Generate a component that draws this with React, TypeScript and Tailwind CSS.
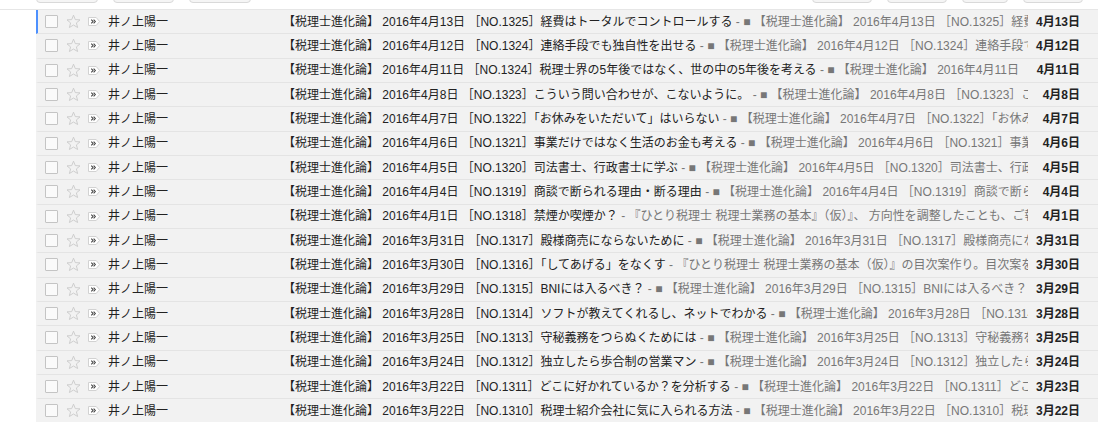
import React from "react";

type Mail = {
  date: string;
  no: string;
  title: string;
  snippet?: string;
  right: string;
};

const mails: Mail[] = [
  { date: "2016年4月13日", no: "1325", title: "経費はトータルでコントロールする", right: "4月13日" },
  { date: "2016年4月12日", no: "1324", title: "連絡手段でも独自性を出せる", right: "4月12日" },
  { date: "2016年4月11日", no: "1324", title: "税理士界の5年後ではなく、世の中の5年後を考える", right: "4月11日" },
  { date: "2016年4月8日", no: "1323", title: "こういう問い合わせが、こないように。", right: "4月8日" },
  { date: "2016年4月7日", no: "1322", title: "「お休みをいただいて」はいらない", right: "4月7日" },
  { date: "2016年4月6日", no: "1321", title: "事業だけではなく生活のお金も考える", right: "4月6日" },
  { date: "2016年4月5日", no: "1320", title: "司法書士、行政書士に学ぶ", right: "4月5日" },
  { date: "2016年4月4日", no: "1319", title: "商談で断られる理由・断る理由", right: "4月4日" },
  {
    date: "2016年4月1日",
    no: "1318",
    title: "禁煙か喫煙か？",
    snippet: "『ひとり税理士 税理士業務の基本』（仮）』、 方向性を調整したことも、ご報告します。",
    right: "4月1日",
  },
  { date: "2016年3月31日", no: "1317", title: "殿様商売にならないために", right: "3月31日" },
  {
    date: "2016年3月30日",
    no: "1316",
    title: "「してあげる」をなくす",
    snippet: "『ひとり税理士 税理士業務の基本（仮）』の目次案作り。目次案をつくりました。",
    right: "3月30日",
  },
  { date: "2016年3月29日", no: "1315", title: "BNIには入るべき？", right: "3月29日" },
  { date: "2016年3月28日", no: "1314", title: "ソフトが教えてくれるし、ネットでわかる", right: "3月28日" },
  { date: "2016年3月25日", no: "1313", title: "守秘義務をつらぬくためには", right: "3月25日" },
  { date: "2016年3月24日", no: "1312", title: "独立したら歩合制の営業マン", right: "3月24日" },
  { date: "2016年3月22日", no: "1311", title: "どこに好かれているか？を分析する", right: "3月23日" },
  { date: "2016年3月22日", no: "1310", title: "税理士紹介会社に気に入られる方法", right: "3月22日" },
];

function StarIcon() {
  return (
    <svg width="15" height="15" viewBox="0 0 15 15" className="shrink-0">
      <polygon
        points="7.5,1.2 9.3,5.6 14,5.9 10.4,8.9 11.6,13.5 7.5,11 3.4,13.5 4.6,8.9 1,5.9 5.7,5.6"
        fill="none"
        stroke="#c9c9c9"
        strokeWidth="0.9"
        strokeLinejoin="round"
      />
    </svg>
  );
}

function ImportanceIcon() {
  return (
    <svg width="14" height="11" viewBox="0 0 14 11" className="shrink-0">
      <path d="M1.5 1.5 H9.2 L12.6 5.5 L9.2 9.5 H1.5 Z" fill="#fff" stroke="#d2d2d2" strokeWidth="1" />
      <path d="M4.3 3.6 L6 5.5 L4.3 7.4 M6.6 3.6 L8.3 5.5 L6.6 7.4" fill="none" stroke="#444" strokeWidth="1.1" />
    </svg>
  );
}

function MailRow({ mail, selected }: { mail: Mail; selected: boolean }) {
  const snippet = mail.snippet ?? `■ 【税理士進化論】 ${mail.date} ［NO.${mail.no}］${mail.title}`;

  return (
    <div
      className={`flex h-[24.33px] items-center border-b border-l-2 border-b-[#e4e4e4] bg-[#f2f2f2] ${
        selected ? "border-l-[#4d90fe]" : "border-l-transparent"
      }`}
    >
      <span className="ml-[7px] h-[13px] w-[13px] shrink-0 rounded-[1px] border border-[#c4c4c4] bg-[#fafafa]" />
      <span className="ml-[8px] flex">
        <StarIcon />
      </span>
      <span className="ml-[6px] flex">
        <ImportanceIcon />
      </span>
      <span className="ml-[7px] w-[175px] shrink-0 truncate text-[#222]">井ノ上陽一</span>
      <div className="min-w-0 flex-1 overflow-hidden whitespace-nowrap">
        <span className="text-[#222]">
          【税理士進化論】 {mail.date} ［NO.{mail.no}］{mail.title}
        </span>
        <span className="text-[#777]"> - {snippet}</span>
      </div>
      <span className="w-[70px] shrink-0 pr-[18px] text-right font-bold text-[#222]">{mail.right}</span>
    </div>
  );
}

export default function App() {
  return (
    <div
      className="h-[422px] w-[1098px] overflow-hidden bg-white text-[12px]"
      style={{ fontFamily: '"Liberation Sans", "Noto Sans CJK JP", sans-serif' }}
    >
      <div className="h-[10px] overflow-hidden border-b border-[#e6e6e6]">
        <div className="-mt-[25px] flex pl-[36px] pr-[15px]">
          <div className="flex gap-[15px]">
            <span className="h-[28px] w-[62px] rounded-sm border border-[#d9d9d9] bg-[#f5f5f5]" />
            <span className="h-[28px] w-[61px] rounded-sm border border-[#d9d9d9] bg-[#f5f5f5]" />
            <span className="h-[28px] w-[62px] rounded-sm border border-[#d9d9d9] bg-[#f5f5f5]" />
          </div>
          <div className="ml-auto flex gap-[15px]">
            <span className="h-[28px] w-[60px] rounded-sm border border-[#d9d9d9] bg-[#f5f5f5]" />
            <span className="h-[28px] w-[60px] rounded-sm border border-[#d9d9d9] bg-[#f5f5f5]" />
            <span className="h-[28px] w-[46px] rounded-sm border border-[#d9d9d9] bg-[#f5f5f5]" />
            <span className="h-[28px] w-[60px] rounded-sm border border-[#d9d9d9] bg-[#f5f5f5]" />
          </div>
        </div>
      </div>
      <div className="ml-[36px]">
        {mails.map((mail, i) => (
          <MailRow key={i} mail={mail} selected={i === 0} />
        ))}
      </div>
    </div>
  );
}
